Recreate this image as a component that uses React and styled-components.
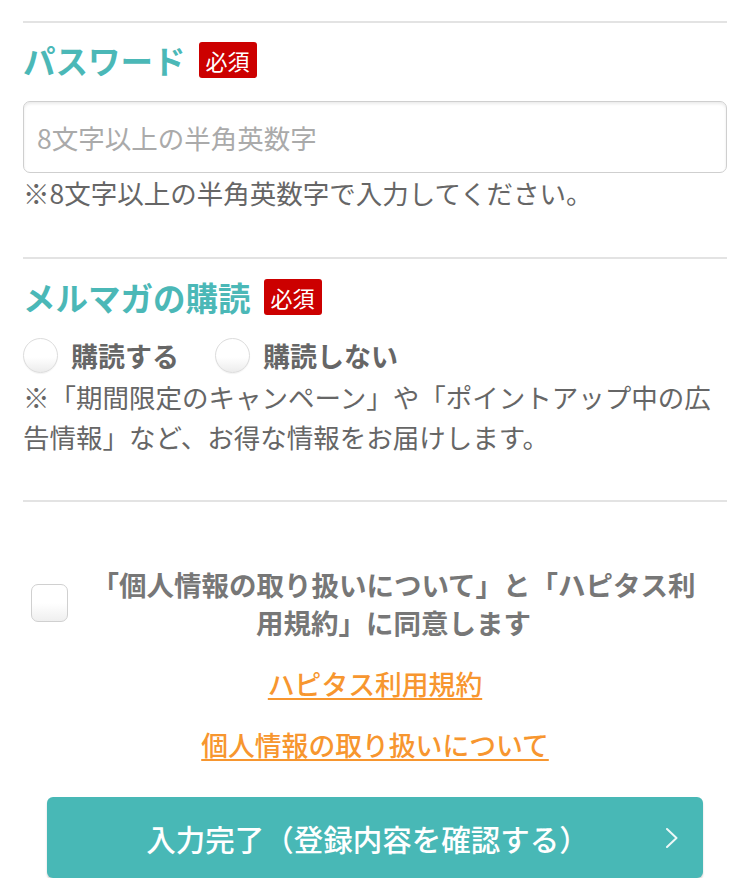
import * as React from 'react';
import styled, { createGlobalStyle } from 'styled-components';

const GlobalStyle = createGlobalStyle`
  body {
    margin: 0;
    background: #fff;
    font-family: "Noto Sans CJK JP", "Noto Sans", sans-serif;
    color: #666;
  }
`;

const App = () => (
  <>
    <GlobalStyle/>
    <Page>
      <Section>
        <HeadingRow>
          <Heading>パスワード</Heading>
          <Badge>必須</Badge>
        </HeadingRow>
        <Input type="password" placeholder="8文字以上の半角英数字"/>
        <Hint>※8文字以上の半角英数字で入力してください。</Hint>
      </Section>

      <Section $top={ 20 } $bottom={ 43 }>
        <HeadingRow>
          <Heading>メルマガの購読</Heading>
          <Badge>必須</Badge>
        </HeadingRow>
        <RadioRow>
          <RadioLabel>
            <Radio/>
            購読する
          </RadioLabel>
          <RadioLabel>
            <Radio/>
            購読しない
          </RadioLabel>
        </RadioRow>
        <Note>※「期間限定のキャンペーン」や「ポイントアップ中の広告情報」など、お得な情報をお届けします。</Note>
      </Section>

      <AgreeSection>
        <AgreeRow>
          <Checkbox/>
          <AgreeText>「個人情報の取り扱いについて」と「ハピタス利用規約」に同意します</AgreeText>
        </AgreeRow>
        <Links>
          <Link href="#terms">ハピタス利用規約</Link>
          <Link href="#privacy">個人情報の取り扱いについて</Link>
        </Links>
        <SubmitButton>
          入力完了（登録内容を確認する）
          <Chevron viewBox="0 0 14 22" aria-hidden="true">
            <path d="M2 2 L11.5 11 L2 20" fill="none" stroke="#fff" strokeWidth="2" strokeLinecap="round" strokeLinejoin="round"/>
          </Chevron>
        </SubmitButton>
      </AgreeSection>
    </Page>
  </>
);

const Page = styled.div`
  width: 704px;
  padding: 21px 5px 0 23px;
`;

const Section = styled.section`
  border-top: 2px solid #e3e3e3;
  padding-top: ${ p => p.$top || 19 }px;
  padding-bottom: ${ p => p.$bottom || 47 }px;
`;

const HeadingRow = styled.div`
  display: flex;
  align-items: center;
  height: 36px;
`;

const Heading = styled.h2`
  margin: 0;
  font-size: 32.5px;
  line-height: 36px;
  font-weight: bold;
  color: #4bb8b7;
`;

const Badge = styled.span`
  margin-left: 13px;
  height: 36px;
  padding: 0 7px;
  display: flex;
  align-items: center;
  background: #cc0000;
  border-radius: 3px;
  color: #fff;
  font-size: 22px;
  line-height: 1;
`;

const Input = styled.input`
  display: block;
  box-sizing: border-box;
  width: 100%;
  height: 72px;
  margin-top: 23px;
  padding: 0 13px;
  border: 1px solid #cfcfcf;
  border-radius: 7px;
  box-shadow: inset 0 2px 3px rgba(0, 0, 0, 0.08);
  font-family: inherit;
  font-size: 26.5px;
  color: #333;
  outline: none;

  &::placeholder {
    color: #aaa;
  }
`;

const Hint = styled.p`
  margin: 3px 0 0;
  font-size: 26.5px;
  line-height: 34px;
  color: #666;
`;

const RadioRow = styled.div`
  display: flex;
  gap: 36px;
  margin-top: 22px;
`;

const RadioLabel = styled.label`
  display: flex;
  align-items: center;
  gap: 13px;
  height: 36px;
  font-size: 27px;
  font-weight: bold;
  color: #666;
`;

const Radio = styled.span`
  box-sizing: border-box;
  width: 35px;
  height: 35px;
  border-radius: 50%;
  border: 1px solid #dcdcdc;
  background: linear-gradient(#fff 55%, #ececec);
  box-shadow: 0 1px 1px rgba(0, 0, 0, 0.05);
`;

const Note = styled.p`
  margin: 4px 0 0;
  font-size: 26.5px;
  line-height: 40px;
  color: #666;
`;

const AgreeSection = styled.section`
  border-top: 2px solid #e3e3e3;
  padding-top: 63px;
`;

const AgreeRow = styled.div`
  display: flex;
  align-items: center;
`;

const Checkbox = styled.span`
  flex-shrink: 0;
  box-sizing: border-box;
  width: 37px;
  height: 38px;
  margin-left: 8px;
  border: 1px solid #d0d0d0;
  border-radius: 7px;
  background: linear-gradient(#fff 50%, #efefef);
`;

const AgreeText = styled.p`
  flex: 1;
  margin: 0 24px 0 16px;
  text-align: center;
  font-size: 27.5px;
  line-height: 38px;
  font-weight: bold;
  color: #777;
`;

const Links = styled.div`
  display: flex;
  flex-direction: column;
  align-items: center;
  gap: 23px;
  margin-top: 24px;
`;

const Link = styled.a`
  font-size: 26.8px;
  line-height: 38px;
  font-weight: 500;
  color: #f7962f;
  text-decoration: underline;
  text-underline-offset: 3px;
`;

const SubmitButton = styled.button`
  position: relative;
  display: flex;
  align-items: center;
  justify-content: center;
  width: 656px;
  height: 81px;
  margin: 33px 0 0 24px;
  padding: 0 15px 0 0;
  border: none;
  border-radius: 6px;
  background: #48b8b6;
  box-shadow: 0 2px 2px rgba(0, 0, 0, 0.18);
  font-family: inherit;
  font-size: 29.5px;
  font-weight: 500;
  color: #fff;
`;

const Chevron = styled.svg`
  position: absolute;
  right: 24px;
  top: 50%;
  width: 14px;
  height: 22px;
  margin-top: -11px;
  opacity: 0.9;
`;

export default App;
